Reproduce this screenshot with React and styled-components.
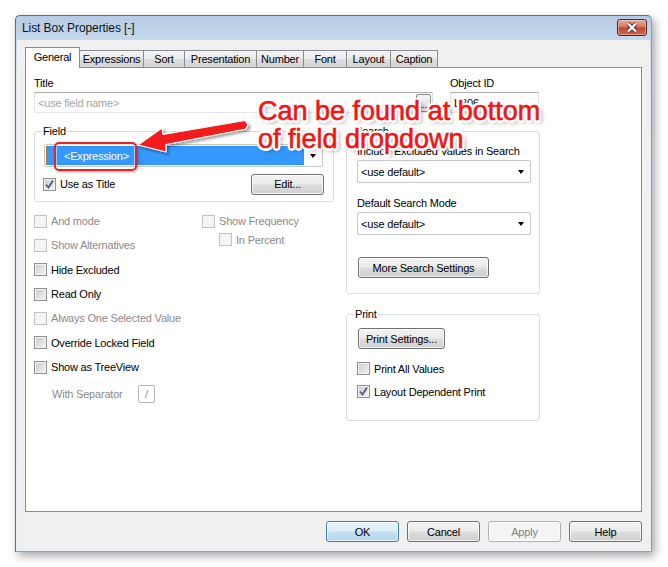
import React from 'react'
import styled, { createGlobalStyle, css } from 'styled-components'

const GlobalStyle = createGlobalStyle`
  html, body {
    margin: 0;
    padding: 0;
    background: #fff;
  }
  body {
    font-family: "Liberation Sans", Arial, sans-serif;
    font-size: 11px;
    letter-spacing: -0.2px;
    color: #000;
  }
  * {
    box-sizing: border-box;
  }
`

const tabs = [
  { name: 'General', w: 55 },
  { name: 'Expressions', w: 65 },
  { name: 'Sort', w: 42 },
  { name: 'Presentation', w: 73 },
  { name: 'Number', w: 48 },
  { name: 'Font', w: 44 },
  { name: 'Layout', w: 45 },
  { name: 'Caption', w: 48 },
]

const Check = ({ label, checked, disabled, h, indent }) => (
  <CheckRow $h={h} $indent={indent}>
    <Box $disabled={disabled}>
      {checked && (
        <svg width='11' height='11' viewBox='0 0 11 11'>
          <path d='M2 5.5 L4.5 8.5 L9 1.5' fill='none' stroke='#4a5d8a' strokeWidth='1.8' />
        </svg>
      )}
    </Box>
    <CheckText $disabled={disabled}>{label}</CheckText>
  </CheckRow>
)

const App = () => {
  return (
    <Page>
      <GlobalStyle />
      <Window>
        <TitleBar>
          <WindowTitle>List Box Properties [-]</WindowTitle>
          <CloseButton>
            <svg width='14' height='11' viewBox='0 0 14 11'>
              <path d='M3 1.5 L11 9.5 M11 1.5 L3 9.5' stroke='#4a2a26' strokeWidth='4' />
              <path d='M3 1.5 L11 9.5 M11 1.5 L3 9.5' stroke='#fff' strokeWidth='2.4' />
            </svg>
          </CloseButton>
        </TitleBar>
        <Client>
          <TabStrip>
            {tabs.map((t, i) => (
              <Tab key={t.name} $w={t.w} $active={i === 0}>
                {t.name}
              </Tab>
            ))}
          </TabStrip>
          <Panel>
            <TopRow>
              <Column $w={399}>
                <FieldLabel>Title</FieldLabel>
                <TextBox $muted>
                  &lt;use field name&gt;
                  <DotButton>...</DotButton>
                </TextBox>
              </Column>
              <Column $w={89} $ml={17}>
                <FieldLabel>Object ID</FieldLabel>
                <TextBox>LB06</TextBox>
              </Column>
            </TopRow>

            <MainRow>
              <LeftCol>
                <Group $h={78}>
                  <GroupLegend>Field</GroupLegend>
                  <Combo $w={279} $ml={2} $mt={6}>
                    <Selection>&lt;Expression&gt;</Selection>
                    <DropArrow />
                  </Combo>
                  <SplitRow>
                    <Check label='Use as Title' checked />
                    <Button $w={73}>Edit...</Button>
                  </SplitRow>
                </Group>

                <CheckArea>
                  <CheckCol>
                    <Check label='And mode' disabled />
                    <Check label='Show Alternatives' disabled />
                    <Check label='Hide Excluded' />
                    <Check label='Read Only' />
                    <Check label='Always One Selected Value' disabled />
                    <Check label='Override Locked Field' />
                    <Check label='Show as TreeView' />
                    <SepRow>
                      <SepLabel>With Separator</SepLabel>
                      <SepInput>/</SepInput>
                    </SepRow>
                  </CheckCol>
                  <div>
                    <Check label='Show Frequency' disabled />
                    <Check label='In Percent' disabled h={13} indent={17} />
                  </div>
                </CheckArea>
              </LeftCol>

              <RightCol>
                <Group $h={170} $pl={10}>
                  <GroupLegend $ml={-3}>Search</GroupLegend>
                  <FieldLabel $mt={6}>Include Excluded Values in Search</FieldLabel>
                  <Combo $w={174} $mt={0}>
                    <ComboText>&lt;use default&gt;</ComboText>
                    <DropArrow />
                  </Combo>
                  <FieldLabel $mt={13}>Default Search Mode</FieldLabel>
                  <Combo $w={174} $mt={0}>
                    <ComboText>&lt;use default&gt;</ComboText>
                    <DropArrow />
                  </Combo>
                  <Button $w={131} $mt={22} $ml={1}>
                    More Search Settings
                  </Button>
                </Group>

                <Group $h={114} $pl={10} $mt={13}>
                  <GroupLegend $ml={-3}>Print</GroupLegend>
                  <Button $w={87} $mt={7} $ml={1}>
                    Print Settings...
                  </Button>
                  <PrintChecks>
                    <Check label='Print All Values' h={23} />
                    <Check label='Layout Dependent Print' checked h={23} />
                  </PrintChecks>
                </Group>
              </RightCol>
            </MainRow>
          </Panel>

          <ButtonRow>
            <Button $w={73} $primary>
              OK
            </Button>
            <Button $w={73}>Cancel</Button>
            <Button $w={73} $disabled>
              Apply
            </Button>
            <Button $w={73}>Help</Button>
          </ButtonRow>
        </Client>
      </Window>

      <Highlight />
      <ArrowSvg width='668' height='567' viewBox='0 0 668 567'>
        <defs>
          <filter id='shadow' x='-20%' y='-50%' width='140%' height='200%'>
            <feDropShadow dx='2' dy='2' stdDeviation='1.5' floodColor='#000' floodOpacity='0.4' />
          </filter>
        </defs>
        <polygon
          points='138,145 162,128 163,134.5 245,120.5 248,124.5 246,129 166,144.5 166,152'
          fill='#f21b1b'
          stroke='#fff'
          strokeWidth='1.2'
          strokeLinejoin='round'
          filter='url(#shadow)'
        />
      </ArrowSvg>
      <Callout>
        Can be found at bottom
        <br />
        of field dropdown
      </Callout>
    </Page>
  )
}

const Page = styled.div`
  position: relative;
  width: 668px;
  height: 567px;
  padding: 15px 0 0 15px;
  overflow: hidden;
`

const Window = styled.div`
  width: 637px;
  height: 537px;
  display: flex;
  flex-direction: column;
  padding: 0 1px 1px;
  border: 1px solid #5d6f83;
  border-right-color: #6aa9cc;
  border-bottom-color: #3fc0e6;
  border-radius: 5px 5px 0 0;
  background: linear-gradient(#b5cbe3, #c6d9ec 24px, #dce8f3 60px, #e4eef7);
  box-shadow: 3px 4px 10px rgba(0, 0, 0, 0.35);
`

const TitleBar = styled.div`
  height: 24px;
  display: flex;
  align-items: flex-start;
  padding: 0 3px 0 5px;
`

const WindowTitle = styled.span`
  font-size: 12px;
  letter-spacing: -0.1px;
  line-height: 24px;
  color: #111;
`

const CloseButton = styled.div`
  margin-left: auto;
  margin-top: 3px;
  width: 30px;
  height: 17px;
  display: flex;
  align-items: center;
  justify-content: center;
  border: 1px solid #5a2520;
  border-radius: 3px;
  background: linear-gradient(#e9a898 0%, #d97b64 45%, #c4462b 52%, #cf6a4e 100%);
  box-shadow: inset 0 0 0 1px rgba(255, 255, 255, 0.35);
`

const Client = styled.div`
  flex: 1;
  display: flex;
  flex-direction: column;
  background: #f0f0f0;
  padding: 7px 8px 8px 8px;
`

const TabStrip = styled.div`
  height: 20px;
  display: flex;
  align-items: flex-end;
`

const Tab = styled.div`
  width: ${(p) => p.$w}px;
  height: 17px;
  margin-left: -1px;
  display: flex;
  align-items: center;
  justify-content: center;
  border: 1px solid #898c95;
  border-bottom: 0;
  background: linear-gradient(#f3f3f3 0%, #ebebeb 50%, #dedede 51%, #d3d3d3 100%);
  ${(p) =>
    p.$active &&
    css`
      position: relative;
      z-index: 2;
      height: 21px;
      margin-left: 0;
      margin-bottom: -1px;
      padding-bottom: 3px;
      background: #fff;
    `}
`

const Panel = styled.div`
  height: 445px;
  border: 1px solid #898c95;
  background: #fff;
  padding: 8px 8px 0 8px;
`

const TopRow = styled.div`
  display: flex;
`

const Column = styled.div`
  width: ${(p) => p.$w}px;
  margin-left: ${(p) => p.$ml || 0}px;
`

const FieldLabel = styled.div`
  height: 14px;
  line-height: 14px;
  margin-top: ${(p) => p.$mt || 0}px;
  margin-bottom: 2px;
  white-space: nowrap;
`

const TextBox = styled.div`
  height: 21px;
  display: flex;
  align-items: center;
  padding: 0 1px 0 3px;
  border: 1px solid;
  border-color: #abadb3 #dbdfe6 #e3e9ef #e2e3ea;
  color: ${(p) => (p.$muted ? '#a3a3a3' : '#000')};
`

const DotButton = styled.div`
  margin-left: auto;
  width: 15px;
  height: 18px;
  border: 1px solid #8a8a8a;
  border-radius: 2px;
  background: linear-gradient(#f4f4f4, #dcdcdc);
  color: #000;
  font-size: 10px;
  text-align: center;
  line-height: 20px;
`

const MainRow = styled.div`
  display: flex;
  margin-top: 11px;
`

const LeftCol = styled.div`
  width: 300px;
`

const RightCol = styled.div`
  width: 194px;
  margin-left: 12px;
`

const Group = styled.fieldset`
  margin: 0;
  margin-top: ${(p) => p.$mt || 0}px;
  height: ${(p) => p.$h}px;
  padding: 0 7px 0 ${(p) => p.$pl || 7}px;
  border: 1px solid #d5dfe5;
  border-radius: 3px;
  min-inline-size: 0;
`

const GroupLegend = styled.legend`
  padding: 0 1px;
  margin-left: ${(p) => p.$ml || 0}px;
  height: 14px;
  line-height: 14px;
`

const Combo = styled.div`
  width: ${(p) => p.$w}px;
  height: 23px;
  margin-top: ${(p) => p.$mt || 0}px;
  margin-left: ${(p) => p.$ml || 0}px;
  padding: 1px;
  display: flex;
  align-items: center;
  border: 1px solid #c4c7cc;
  border-radius: 2px;
  background: #fff;
`

const Selection = styled.div`
  width: 258px;
  height: 19px;
  display: flex;
  align-items: center;
  padding-left: 18px;
  color: #fff;
  background: #3399ff;
  outline: 1px dotted #b06a2a;
  outline-offset: -1px;
`

const ComboText = styled.span`
  padding-left: 2px;
`

const DropArrow = styled.span`
  margin-left: auto;
  margin-right: 5px;
  width: 0;
  height: 0;
  border-left: 3.5px solid transparent;
  border-right: 3.5px solid transparent;
  border-top: 4px solid #000;
`

const SplitRow = styled.div`
  height: 22px;
  margin-top: 6px;
  padding-left: 1px;
  padding-right: 2px;
  display: flex;
  align-items: center;
  justify-content: space-between;
`

const CheckArea = styled.div`
  display: flex;
  margin-top: 7px;
`

const CheckCol = styled.div`
  width: 168px;
`

const CheckRow = styled.div`
  height: ${(p) => p.$h || 24.33}px;
  padding-left: ${(p) => p.$indent || 0}px;
  display: flex;
  align-items: center;
  white-space: nowrap;
`

const Box = styled.span`
  width: 13px;
  height: 13px;
  flex: none;
  display: flex;
  align-items: center;
  justify-content: center;
  border: 1px solid #8e8f8f;
  background: linear-gradient(135deg, #cbcbcb, #f4f4f4);
  box-shadow: inset 0 0 0 1px #f2f2f2;
  ${(p) =>
    p.$disabled &&
    css`
      border-color: #c2c2c2;
      background: #f5f5f5;
      box-shadow: none;
    `}
`

const CheckText = styled.span`
  margin-left: 4px;
  color: ${(p) => (p.$disabled ? '#8a8a8a' : '#000')};
`

const SepRow = styled.div`
  height: 18px;
  margin-top: 6px;
  padding-left: 18px;
  display: flex;
  align-items: center;
`

const SepLabel = styled.span`
  width: 86px;
  color: #8a8a8a;
`

const SepInput = styled.div`
  width: 17px;
  height: 18px;
  border: 1px solid #b5b5b5;
  border-radius: 2px;
  color: #8a8a8a;
  text-align: center;
  line-height: 16px;
`

const PrintChecks = styled.div`
  margin-top: 8px;
`

const Button = styled.div`
  width: ${(p) => p.$w}px;
  height: 21px;
  margin-top: ${(p) => p.$mt || 0}px;
  margin-left: ${(p) => p.$ml || 0}px;
  display: flex;
  align-items: center;
  justify-content: center;
  white-space: nowrap;
  border: 1px solid #707070;
  border-radius: 3px;
  background: linear-gradient(#f2f2f2 0%, #ebebeb 48%, #dddddd 52%, #cfcfcf 100%);
  box-shadow: inset 0 0 0 1px rgba(255, 255, 255, 0.7);
  ${(p) =>
    p.$primary &&
    css`
      border-color: #3c7fb1;
      background: linear-gradient(#e8f4fb 0%, #dcedf8 48%, #c4e0f2 52%, #b5d7ee 100%);
    `}
  ${(p) =>
    p.$disabled &&
    css`
      border-color: #adb2b5;
      background: #f4f4f4;
      color: #838383;
    `}
`

const ButtonRow = styled.div`
  margin-top: 9px;
  display: flex;
  justify-content: flex-end;
  gap: 8px;
`

const Highlight = styled.div`
  position: absolute;
  left: 54px;
  top: 142px;
  width: 83px;
  height: 29px;
  border: 2px solid #e52424;
  border-radius: 5px;
  box-shadow: 1px 1px 3px rgba(0, 0, 0, 0.35), inset 0 0 0 1px rgba(255, 255, 255, 0.5);
`

const ArrowSvg = styled.svg`
  position: absolute;
  left: 0;
  top: 0;
  pointer-events: none;
`

const Callout = styled.div`
  position: absolute;
  left: 258px;
  top: 97px;
  font-family: "Liberation Sans", Arial, sans-serif;
  font-size: 27px;
  line-height: 28px;
  letter-spacing: 0;
  white-space: nowrap;
  color: #f21414;
  -webkit-text-stroke: 0.6px #f21414;
  text-shadow: -2px -2px 0 #fff, 2px -2px 0 #fff, -2px 2px 0 #fff, 2px 2px 0 #fff,
    0 -2.5px 0 #fff, 0 2.5px 0 #fff, -2.5px 0 0 #fff, 2.5px 0 0 #fff,
    3px 3px 4px rgba(0, 0, 0, 0.45);
`

export default App
